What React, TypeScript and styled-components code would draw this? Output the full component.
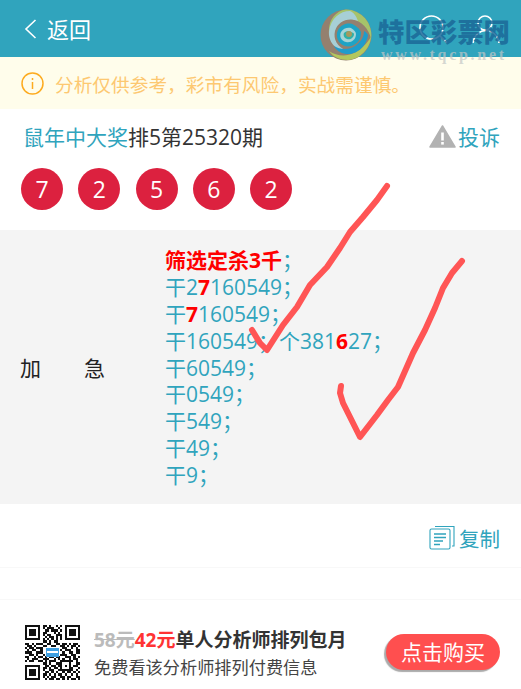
import React from "react";
import styled, { createGlobalStyle } from "styled-components";

const GlobalStyle = createGlobalStyle`
  html, body {
    margin: 0;
    padding: 0;
    background: #fff;
    font-family: "Open Sans", "Noto Sans CJK SC", sans-serif;
  }
  * { box-sizing: border-box; }
`;

const Page = styled.div`
  position: relative;
  width: 521px;
  height: 689px;
  overflow: hidden;
  background: #fff;
`;

const TopBar = styled.header`
  height: 57px;
  background: #30a4bd;
  display: flex;
  align-items: center;
  justify-content: space-between;
  padding: 0 21px 0 24px;
  color: #fff;
`;

const BackLink = styled.div`
  display: flex;
  align-items: center;
  gap: 10px;
  font-size: 22px;
  line-height: 30px;
`;

const TopIcons = styled.div`
  display: flex;
  align-items: center;
  gap: 24px;
`;

const Notice = styled.div`
  height: 52px;
  background: #fffdeb;
  display: flex;
  align-items: center;
  gap: 11px;
  padding-left: 21px;
  color: #fdc871;
  font-size: 18.7px;
`;

const TitleRow = styled.div`
  height: 59px;
  display: flex;
  align-items: center;
  justify-content: space-between;
  padding: 0 21px 5px 23px;
  font-size: 21px;
  color: #333;
`;

const TitleText = styled.div`
  white-space: nowrap;
`;

const Analyst = styled.span`
  color: #30a4bd;
`;

const Complaint = styled.div`
  display: flex;
  align-items: center;
  gap: 2px;
  color: #30a4bd;
`;

const Balls = styled.div`
  display: flex;
  gap: 15.25px;
  padding-left: 21px;
  height: 62px;
`;

const Ball = styled.div`
  width: 42px;
  height: 42px;
  border-radius: 50%;
  background: #dc213f;
  color: #fff;
  font-size: 23px;
  display: flex;
  align-items: center;
  justify-content: center;
`;

const ResultPanel = styled.section`
  height: 274px;
  background: #f4f4f4;
  display: flex;
  align-items: center;
`;

const UrgentLabel = styled.div`
  width: 165px;
  padding-left: 20px;
  display: flex;
  gap: 43px;
  font-size: 21px;
  color: #222;
`;

const Lines = styled.div`
  color: #30a4bd;
  font-size: 21px;
  line-height: 26.9px;
  margin-top: 2px;
`;

const Hot = styled.b`
  color: #f00;
`;

const CopyRow = styled.div`
  height: 64px;
  display: flex;
  align-items: center;
  justify-content: flex-end;
  gap: 4px;
  padding: 4px 21px 0 0;
  color: #30a4bd;
  font-size: 20.5px;
  border-bottom: 1px solid #f8f8f8;
`;

const Spacer = styled.div`
  height: 32px;
  border-bottom: 1px solid #f8f8f8;
`;

const Promo = styled.div`
  height: 90px;
  display: flex;
  align-items: flex-start;
  padding: 25px 21px 0 25px;
`;

const PromoText = styled.div`
  flex: 1;
  margin-left: 14px;
  margin-top: 1px;
`;

const PromoTitle = styled.div`
  font-size: 19px;
  line-height: 28px;
  font-weight: 700;
  color: #333;
  white-space: nowrap;
`;

const OldPrice = styled.s`
  color: #bbb;
`;

const NewPrice = styled.span`
  color: #ff3333;
`;

const PromoSub = styled.div`
  font-size: 17.2px;
  line-height: 28px;
  color: #444;
  white-space: nowrap;
`;

const BuyButton = styled.button`
  width: 114px;
  height: 36px;
  margin-top: 9px;
  border: 0;
  border-radius: 18px;
  background: #ff4f4f;
  box-shadow: -2px 2px 1px #aaa;
  color: #fff;
  font-family: inherit;
  font-size: 21px;
  line-height: 36px;
  padding: 0;
`;

const Watermark = styled.div`
  position: absolute;
  top: 9px;
  left: 320px;
  display: flex;
  gap: 6px;
  pointer-events: none;
`;

const MarkText = styled.div`
  display: flex;
  flex-direction: column;
  margin-top: 8px;
`;

const MarkName = styled.div`
  font-family: "Noto Sans CJK SC", sans-serif;
  font-weight: 900;
  font-size: 26.4px;
  line-height: 28px;
  color: rgba(27, 104, 152, 0.85);
  white-space: nowrap;
`;

const MarkUrl = styled.div`
  font-family: "Liberation Serif", serif;
  font-weight: 700;
  font-size: 16px;
  letter-spacing: 2.7px;
  line-height: 16px;
  margin: 2px 0 0 3px;
  color: rgba(195, 198, 198, 0.7);
  white-space: nowrap;
`;

const Ticks = styled.svg`
  position: absolute;
  left: 0;
  top: 0;
  pointer-events: none;
`;

const qrRows = [
  "1111111011010010101111111",
  "1000001010111001001000001",
  "1011101001101110101011101",
  "1011101011000101001011101",
  "1011101010110011101011101",
  "1000001001011010101000001",
  "1111111010101010101111111",
  "0000000011010110000000000",
  "1101011100110011011010110",
  "0110100011001100110101101",
  "1011011100000000011001010",
  "0101100100000000101110011",
  "1110011100000000010011011",
  "0011010010000000111001100",
  "1100101101011011001110101",
  "0101110011100101010010110",
  "1011001101011100111111010",
  "0000000011010011100010011",
  "1111111001101101101010110",
  "1000001011010110100011001",
  "1011101010011001111111010",
  "1011101001101010010110101",
  "1011101011010101101001010",
  "1000001010101100110110011",
  "1111111001011011010101101",
];

const QrCode = () => (
  <svg width="55" height="55" viewBox="0 0 25 25" shapeRendering="crispEdges">
    <rect width="25" height="25" fill="#fff" />
    {qrRows.map((row, y) =>
      row.split("").map((c, x) => (c === "1" ? <rect key={`${x}-${y}`} x={x} y={y} width="1" height="1" fill="#111" /> : null)),
    )}
    <rect x="9.5" y="10.5" width="6" height="4" rx="0.6" fill="#3f9fe0" />
    <rect x="10" y="12" width="5" height="0.6" fill="#fff" />
  </svg>
);

const SwirlLogo = () => (
  <svg width="52" height="52" viewBox="0 0 52 52">
    <circle cx="26" cy="26" r="25.5" fill="#94806f" />
    <path d="M26 .5 A25.5 25.5 0 0 1 51 30 C49 20 42 12 31 10 C22 8 12 14 9 24 C8 12 15 2 26 .5 Z" fill="#a6c36a" />
    <path d="M30 2 C20 2 11 9 9 22 C8 32 15 42 27 42 C17 38 13 30 15 22 C18 12 28 8 38 12 C36 6 33 3 30 2 Z" fill="#a7cfd6" />
    <path d="M51 28 C50 40 40 50 28 51 C20 51 13 48 9 42 C16 47 26 48 34 44 C42 40 47 34 51 28 Z" fill="#b3c75c" />
    <path d="M48 26 C47 36 38 46 26 45 C20 44 16 41 14 37 C20 41 29 41 35 37 C41 33 44 28 44 22 C46 23 47 24 48 26 Z" fill="#1f9ccb" />
    <path d="M41 24 C41 33 33 39 25 37 C18 35 15 27 18 21 C21 15 29 13 34 16 C39 19 41 22 41 24 Z" fill="#1ea3c5" />
    <path d="M36 25 C36 31 31 34 26 33 C21 32 19 27 21 23 C23 19 28 18 31 19 C34 21 36 23 36 25 Z" fill="#a7d4d6" />
    <path d="M34 25 C34 29 30 31 27 30 C24 29 23 26 24 24 C26 22 29 21 31 23 C33 24 34 24 34 25 Z" fill="#2fb1a8" />
    <circle cx="29" cy="25" r="3" fill="#a49a5e" />
  </svg>
);

const App = () => {
  const lines = [
    <>干2<Hot>7</Hot>160549；</>,
    <>干<Hot>7</Hot>160549；</>,
    <>干160549；个381<Hot>6</Hot>27；</>,
    <>干60549；</>,
    <>干0549；</>,
    <>干549；</>,
    <>干49；</>,
    <>干9；</>,
  ];

  return (
    <Page>
      <GlobalStyle />
      <TopBar>
        <BackLink>
          <svg width="13" height="20" viewBox="0 0 13 20" fill="none" stroke="#fff" strokeWidth="1.6">
            <path d="M11.5 1 L2 10 L11.5 19" />
          </svg>
          返回
        </BackLink>
        <TopIcons>
          <svg width="29" height="28" viewBox="0 0 29 28" fill="none" stroke="#fff" strokeWidth="1.6">
            <circle cx="12.5" cy="12.5" r="11.5" />
            <path d="M21 21 L28 27.5" />
          </svg>
          <svg width="28" height="28" viewBox="0 0 28 28" fill="none" stroke="#fff" strokeWidth="1.6">
            <circle cx="13" cy="8" r="7" />
            <path d="M1 28 C2 20 8 15.5 14 15.5 C20 15.5 26 20 27 28" />
          </svg>
        </TopIcons>
      </TopBar>

      <Notice>
        <svg width="23" height="23" viewBox="0 0 23 23" fill="none" stroke="#fdab1f" strokeWidth="1.5">
          <circle cx="11.5" cy="11.5" r="10.5" />
          <path d="M11.5 10 V17" />
          <path d="M11.5 6 V8" />
        </svg>
        分析仅供参考，彩市有风险，实战需谨慎。
      </Notice>

      <TitleRow>
        <TitleText>
          <Analyst>鼠年中大奖</Analyst>排5第25320期
        </TitleText>
        <Complaint>
          <svg width="27" height="23" viewBox="0 0 27 23">
            <path d="M13.5 1 L26 22 H1 Z" fill="#b2b2b2" stroke="#b2b2b2" strokeWidth="1.5" strokeLinejoin="round" />
            <rect x="12.2" y="7.5" width="2.6" height="8" fill="#fff" />
            <rect x="12.2" y="17" width="2.6" height="2.6" fill="#fff" />
          </svg>
          投诉
        </Complaint>
      </TitleRow>

      <Balls>
        {[7, 2, 5, 6, 2].map((n, i) => (
          <Ball key={i}>{n}</Ball>
        ))}
      </Balls>

      <ResultPanel>
        <UrgentLabel>
          <span>加</span>
          <span>急</span>
        </UrgentLabel>
        <Lines>
          <div>
            <Hot>筛选定杀3千</Hot>；
          </div>
          {lines.map((line, i) => (
            <div key={i}>{line}</div>
          ))}
        </Lines>
      </ResultPanel>

      <CopyRow>
        <svg width="26" height="25" viewBox="0 0 26 25" fill="none" stroke="#30a4bd" strokeWidth="1.1">
          <path d="M6 1.5 H25 V21 H23" />
          <rect x="1" y="4" width="20" height="20" rx="1.5" />
          <path d="M5 9 H17 M5 12.5 H17 M5 16 H14 M5 19.5 H11" strokeWidth="1.3" />
        </svg>
        复制
      </CopyRow>

      <Spacer />

      <Promo>
        <QrCode />
        <PromoText>
          <PromoTitle>
            <OldPrice>58元</OldPrice>
            <NewPrice>42元</NewPrice>单人分析师排列包月
          </PromoTitle>
          <PromoSub>免费看该分析师排列付费信息</PromoSub>
        </PromoText>
        <BuyButton>点击购买</BuyButton>
      </Promo>

      <Ticks width="521" height="689" viewBox="0 0 521 689" fill="none" stroke="#ff5555" strokeWidth="6" strokeLinecap="round" strokeLinejoin="round">
        <path d="M387 186 L377 200 L363 217 L350 232 L340 248 L327 267 L310 285 L297 307 L283 325 L267 350 L260 343 L252 330" />
        <path d="M462 261 L452 273 L443 288 L435 308 L425 330 L413 353 L398 387 L388 400 L377 415 L360 437 L353 423 L343 403 L340 393 L341 386" />
      </Ticks>

      <Watermark>
        <SwirlLogo />
        <MarkText>
          <MarkName>特区彩票网</MarkName>
          <MarkUrl>www.tqcp.net</MarkUrl>
        </MarkText>
      </Watermark>
    </Page>
  );
};

export default App;
